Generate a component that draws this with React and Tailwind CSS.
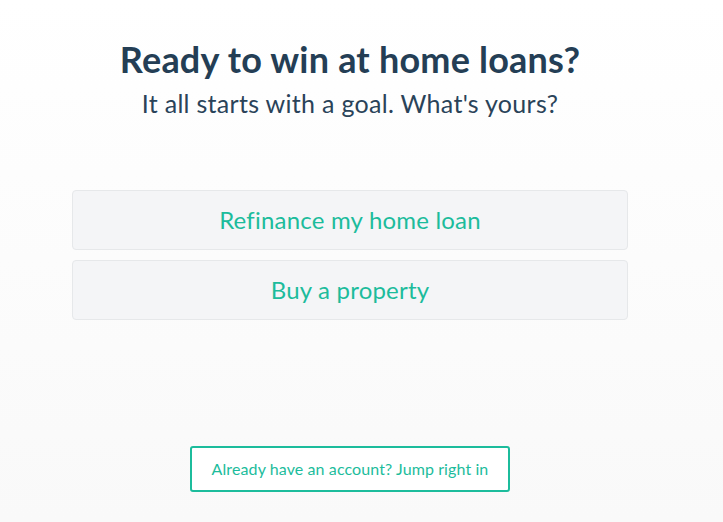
export default function App() {
    return (
        <div
            className="min-h-[522px] w-full bg-gradient-to-b from-white to-[#f9f9f9]"
            style={{ fontFamily: 'Lato, "Noto Sans", sans-serif' }}
        >
            <div className="w-[700px] px-[72px] flex flex-col items-center">
                <h1 className="mt-[36px] text-[36px] leading-[46px] font-bold text-[#243e55] tracking-[0.2px]">
                    Ready to win at home loans?
                </h1>
                <p className="mt-[5px] text-[25px] leading-[32px] text-[#2a4359] tracking-[0.3px]">
                    It all starts with a goal. What's yours?
                </p>

                <div className="mt-[71px] w-full flex flex-col gap-[10px]">
                    <button className="h-[60px] w-full rounded-[4px] border border-[#e6e8ea] bg-[#f4f5f7] text-[24px] tracking-[0.2px] text-[#1cbc9c]">
                        Refinance my home loan
                    </button>
                    <button className="h-[60px] w-full rounded-[4px] border border-[#e6e8ea] bg-[#f4f5f7] text-[24px] tracking-[0.2px] text-[#1cbc9c]">
                        Buy a property
                    </button>
                </div>

                <button className="mt-[126px] h-[46px] w-[320px] rounded-[3px] border-2 border-[#1cbc9c] bg-white text-[16px] tracking-[0.1px] text-[#1cbc9c]">
                    Already have an account? Jump right in
                </button>
            </div>
        </div>
    );
}
